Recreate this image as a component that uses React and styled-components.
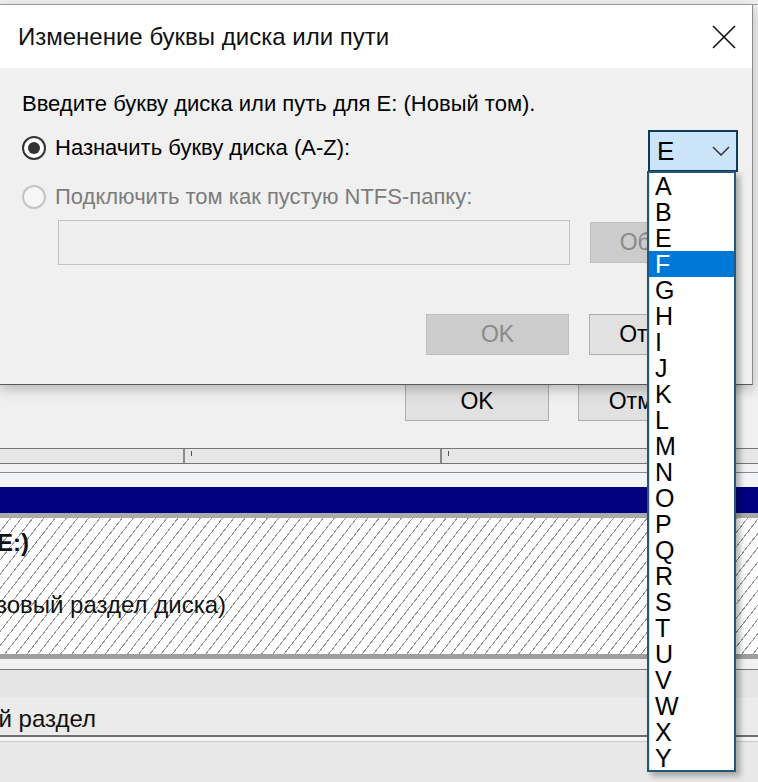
import React from 'react';
import styled, { createGlobalStyle } from 'styled-components';

const GlobalStyle = createGlobalStyle`
  html, body {
    margin: 0;
    padding: 0;
  }
  body {
    font-family: "Liberation Sans", Arial, sans-serif;
    background: #f0f0f0;
  }
`;

// Весь экран
const Screen = styled.div`
  position: relative;
  width: 758px;
  height: 782px;
  overflow: hidden;
  background: #f0f0f0;
`;

// Окно "Управление дисками" на заднем плане
const BackWindow = styled.div`
  display: flex;
  flex-direction: column;
  height: 100%;
`;

const TopEdge = styled.div`
  height: 4px;
  border-bottom: 1px solid #a3a3a3;
`;

const Covered = styled.div`
  height: 380px;
`;

const BackButtons = styled.div`
  height: 39px;
  display: flex;
  gap: 29px;
  padding-left: 405px;
`;

const Button = styled.div`
  box-sizing: border-box;
  width: ${({ $w }) => $w || 143}px;
  height: ${({ $h }) => $h || 41}px;
  display: flex;
  align-items: center;
  justify-content: center;
  flex-shrink: 0;
  font-size: 23px;
  background: ${({ $disabled }) => ($disabled ? '#cccccc' : '#e1e1e1')};
  border: 1px solid ${({ $disabled }) => ($disabled ? '#bfbfbf' : '#adadad')};
  color: ${({ $disabled }) => ($disabled ? '#8a8a8a' : '#000')};
`;

const HeaderRow = styled.div`
  margin-top: 27px;
  box-sizing: border-box;
  height: 16px;
  display: grid;
  grid-template-columns: 183px 257px 1fr;
  border-top: 1px solid #777;
  border-bottom: 1px solid #777;
  background: #e6e6e6;
`;

const HeaderCell = styled.div`
  position: relative;
  border-left: ${({ $first }) => ($first ? 'none' : '2px solid #8a8a8a')};

  &::after {
    content: '';
    display: ${({ $first }) => ($first ? 'none' : 'block')};
    position: absolute;
    left: 6px;
    top: 2px;
    width: 1px;
    height: 5px;
    background: #555;
  }
`;

const Band = styled.div`
  height: ${({ $h }) => $h}px;
  background: ${({ $bg }) => $bg};
  flex-shrink: 0;
`;

const Rule = styled.div`
  height: ${({ $h }) => $h || 1}px;
  background: ${({ $c }) => $c};
  flex-shrink: 0;
`;

const NavyBar = styled.div`
  height: 26px;
  background: #000080;
  flex-shrink: 0;
`;

const HatchPanel = styled.div`
  height: 136px;
  box-sizing: border-box;
  padding-top: 10px;
  flex-shrink: 0;
  background-color: #fff;
  background-image: repeating-linear-gradient(
    128deg,
    #fff 0px,
    #fff 7.8px,
    #959595 7.8px,
    #959595 8.8px
  );
`;

// Текст, обрезанный левым краем экрана
const ClipText = styled.div`
  width: ${({ $end }) => $end}px;
  margin-top: ${({ $mt }) => $mt || 0}px;
  padding-top: ${({ $pt }) => $pt || 0}px;
  display: flex;
  justify-content: flex-end;
  white-space: nowrap;
  font-size: 24px;
  line-height: 30px;
  font-weight: ${({ $bold }) => ($bold ? 700 : 400)};
  color: #111;
`;

const LegendRow = styled.div`
  height: 38px;
  display: flex;
  align-items: center;
  background: #ebebeb;
  flex-shrink: 0;
`;

// Диалог
const Dialog = styled.div`
  position: absolute;
  top: 5px;
  left: 0;
  width: 753px;
  height: 380px;
  box-sizing: border-box;
  background: #f0f0f0;
  border-right: 1px solid #8c8c8c;
  border-bottom: 1px solid #5a5a5a;
  box-shadow: 0 4px 12px rgba(0, 0, 0, 0.25);
  display: flex;
  flex-direction: column;
`;

const TitleBar = styled.div`
  height: 63px;
  flex-shrink: 0;
  background: #fff;
  display: flex;
  align-items: center;
  justify-content: space-between;
  padding: 0 16px 0 18px;
  font-size: 24px;
  color: #111;
`;

const Body = styled.div`
  padding: 0 17px 0 22px;
  display: flex;
  flex-direction: column;
`;

const Prompt = styled.div`
  margin-top: 21px;
  font-size: 22px;
  line-height: 30px;
  color: #000;
`;

const OptionRow = styled.div`
  margin-top: ${({ $mt }) => $mt}px;
  display: flex;
  align-items: flex-start;
  justify-content: space-between;
`;

const Option = styled.div`
  display: flex;
  align-items: center;
  gap: 9px;
  padding-top: ${({ $pt }) => $pt || 0}px;
  font-size: 22px;
  line-height: 30px;
  color: ${({ $disabled }) => ($disabled ? '#7c7c7c' : '#000')};
`;

const Radio = styled.span`
  width: 24px;
  height: 24px;
  box-sizing: border-box;
  border-radius: 50%;
  flex-shrink: 0;
  display: flex;
  align-items: center;
  justify-content: center;
  border: 2px solid ${({ $disabled }) => ($disabled ? '#c4c4c4' : '#333')};
  background: ${({ $disabled }) => ($disabled ? '#f6f6f6' : '#fff')};

  &::after {
    content: '';
    display: ${({ $checked }) => ($checked ? 'block' : 'none')};
    width: 12px;
    height: 12px;
    border-radius: 50%;
    background: #333;
  }
`;

const Combo = styled.div`
  width: 90px;
  height: 42px;
  box-sizing: border-box;
  margin-right: -3px;
  border: 2px solid #0f3b5a;
  background: #cce4f7;
  display: flex;
  align-items: center;
  justify-content: space-between;
  padding: 0 6px 0 7px;
  font-size: 26px;
  color: #000;
`;

const FolderRow = styled.div`
  margin-top: 8px;
  padding-left: 36px;
  display: flex;
  align-items: center;
  gap: 20px;
`;

const PathInput = styled.div`
  width: 512px;
  height: 45px;
  box-sizing: border-box;
  border: 1px solid #c2c2c2;
  background: #efefef;
`;

const Actions = styled.div`
  margin-top: 49px;
  padding-right: 3px;
  display: flex;
  justify-content: flex-end;
  gap: 20px;
`;

// Выпадающий список букв
const LetterList = styled.div`
  position: absolute;
  left: 647px;
  top: 171px;
  width: 89px;
  height: 601px;
  box-sizing: border-box;
  background: #fff;
  border: 2px solid #23587a;
  box-shadow: inset 1px 0 0 #bfeaf6, 4px 4px 6px rgba(0, 0, 0, 0.3);
  display: flex;
  flex-direction: column;
`;

const Letter = styled.div`
  height: 26px;
  line-height: 26px;
  padding-left: 6px;
  font-size: 25px;
  color: ${({ $selected }) => ($selected ? '#fff' : '#000')};
  background: ${({ $selected }) => ($selected ? '#0078d7' : 'transparent')};
`;

const CloseIcon = () => (
  <svg width="24" height="24" viewBox="0 0 24 24">
    <path d="M1 1 L23 23 M23 1 L1 23" stroke="#111" strokeWidth="1.6" fill="none" />
  </svg>
);

const Chevron = () => (
  <svg width="18" height="10" viewBox="0 0 18 10">
    <path d="M1 1 L9 9 L17 1" stroke="#333" strokeWidth="1.5" fill="none" />
  </svg>
);

const letters = ['A', 'B', 'E', 'F', 'G', 'H', 'I', 'J', 'K', 'L', 'M', 'N', 'O', 'P', 'Q', 'R', 'S', 'T', 'U', 'V', 'W', 'X', 'Y'];

const App = () => {
  return (
    <Screen>
      <GlobalStyle />
      <BackWindow>
        <TopEdge />
        <Covered />
        <BackButtons>
          <Button $w={144} $h={39}>OK</Button>
          <Button $w={144} $h={39}>Отмена</Button>
        </BackButtons>
        <HeaderRow>
          <HeaderCell $first />
          <HeaderCell />
          <HeaderCell />
        </HeaderRow>
        <Band $h={8} $bg="#f2f2f2" />
        <Rule $c="#8a8a8a" />
        <Band $h={14} $bg="#f3f3fa" />
        <NavyBar />
        <Rule $h={5} $c="#a9a9a9" />
        <HatchPanel>
          <ClipText $end={29} $bold>Новый том (E:)</ClipText>
          <ClipText $end={226} $mt={32}>Исправен (Базовый раздел диска)</ClipText>
        </HatchPanel>
        <Rule $h={5} $c="#9e9e9e" />
        <Band $h={10} $bg="#f1f1f1" />
        <Rule $c="#777" />
        <Band $h={27} $bg="#e5e5e5" />
        <LegendRow>
          <ClipText $end={96} $pt={6}>Основной раздел</ClipText>
        </LegendRow>
        <Rule $h={2} $c="#6f6f6f" />
        <Band $h={4} $bg="#f5f5f5" />
        <Rule $c="#c8c8c8" />
        <Band $h={40} $bg="#e8e8e8" />
      </BackWindow>

      <Dialog>
        <TitleBar>
          Изменение буквы диска или пути
          <CloseIcon />
        </TitleBar>
        <Body>
          <Prompt>Введите букву диска или путь для E: (Новый том).</Prompt>
          <OptionRow $mt={11}>
            <Option $pt={3}>
              <Radio $checked />
              Назначить букву диска (A-Z):
            </Option>
            <Combo>
              E
              <Chevron />
            </Combo>
          </OptionRow>
          <OptionRow $mt={10}>
            <Option $disabled>
              <Radio $disabled />
              Подключить том как пустую NTFS-папку:
            </Option>
          </OptionRow>
          <FolderRow>
            <PathInput />
            <Button $disabled $w={145}>Обзор...</Button>
          </FolderRow>
          <Actions>
            <Button $disabled>OK</Button>
            <Button>Отмена</Button>
          </Actions>
        </Body>
      </Dialog>

      <LetterList>
        {letters.map((l) => (
          <Letter key={l} $selected={l === 'F'}>{l}</Letter>
        ))}
      </LetterList>
    </Screen>
  );
};

export default App;
